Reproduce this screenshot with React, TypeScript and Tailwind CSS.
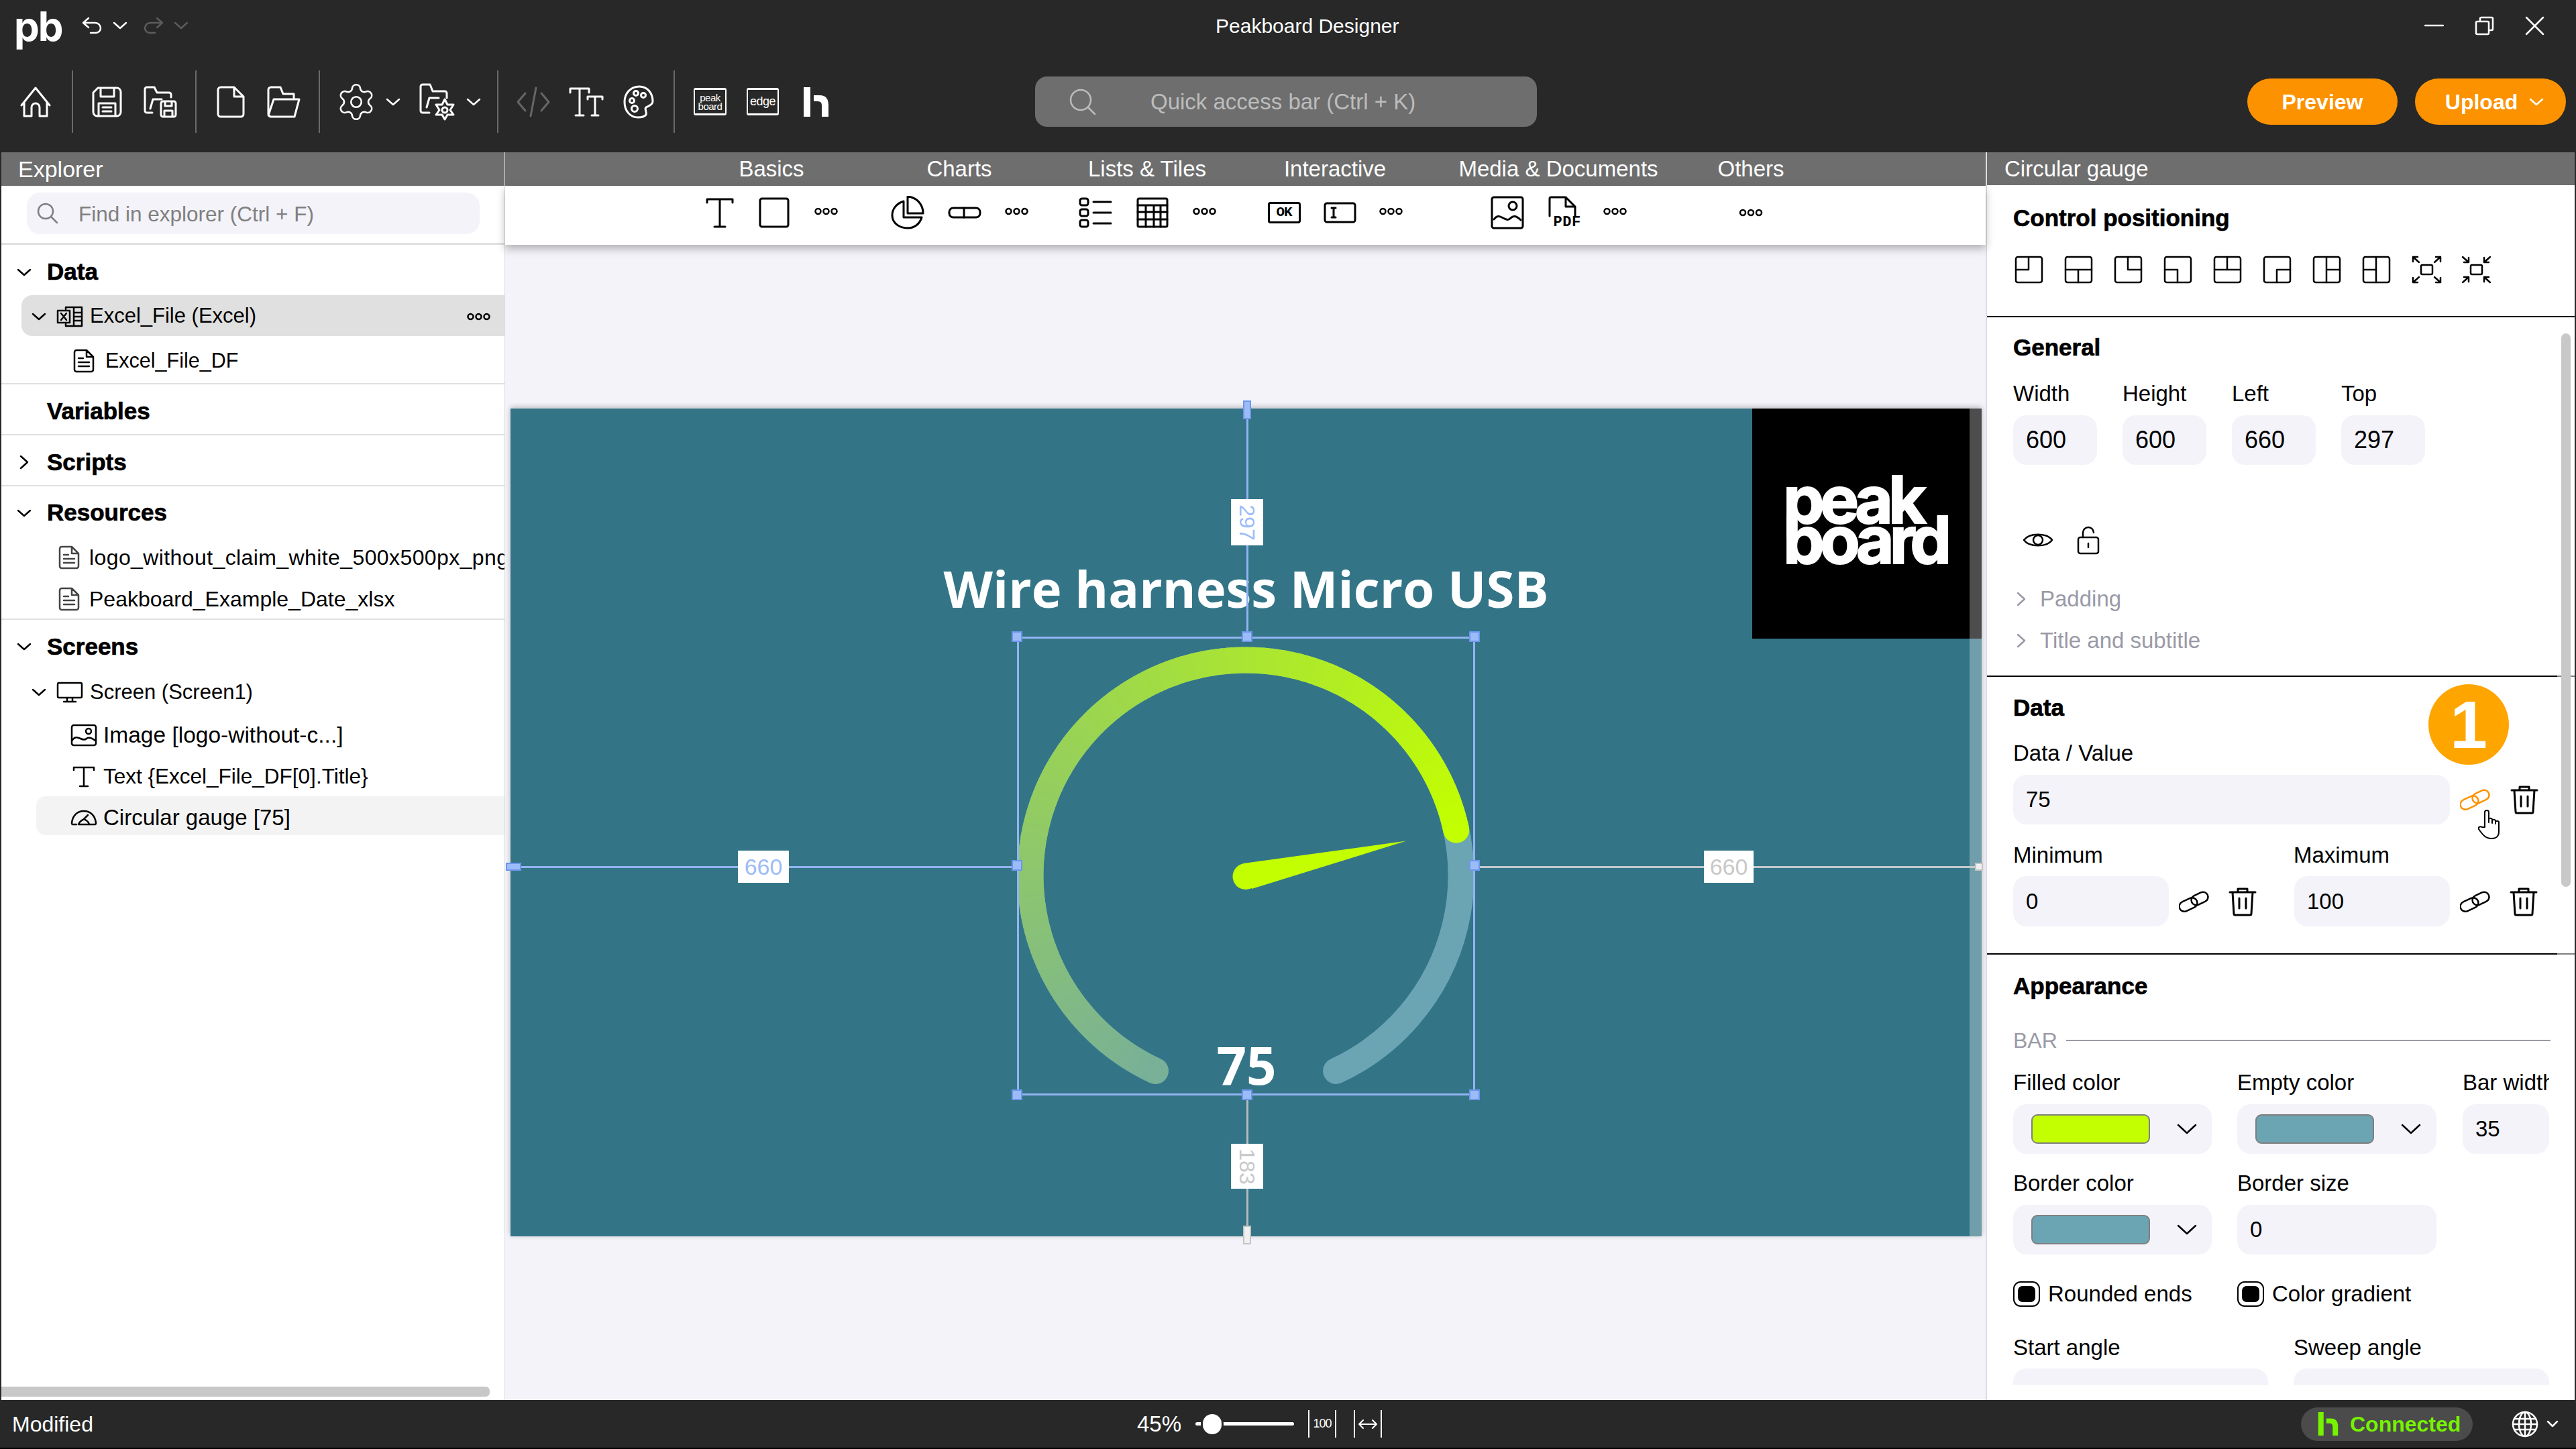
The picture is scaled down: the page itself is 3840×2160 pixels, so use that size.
import type { ReactNode } from 'react'
import { Settings } from 'lucide-react'

const Svg = ({ w, h, sw = 3, className = '', children }: { w: number; h: number; sw?: number; className?: string; children: ReactNode }) => (
  <svg width={w} height={h} viewBox={`0 0 ${w} ${h}`} fill="none" stroke="currentColor" strokeWidth={sw} strokeLinecap="round" strokeLinejoin="round" className={`shrink-0 ${className}`}>
    {children}
  </svg>
)

const ChevronDown = ({ className = '', w = 22, h = 12 }: { className?: string; w?: number; h?: number }) => (
  <Svg w={w} h={h} sw={2.5} className={className}>
    <path d={`M2 2 L${w / 2} ${h - 2} L${w - 2} 2`} />
  </Svg>
)

const ChevronRight = ({ className = '' }: { className?: string }) => (
  <Svg w={14} h={22} sw={2.5} className={className}>
    <path d="M2 2 L12 11 L2 20" />
  </Svg>
)

const Dots = ({ className = '', w = 35 }: { className?: string; w?: number }) => (
  <Svg w={w} h={12} sw={2.5} className={className}>
    <circle cx={w / 2 - 12} cy={6} r={4} />
    <circle cx={w / 2} cy={6} r={4} />
    <circle cx={w / 2 + 12} cy={6} r={4} />
  </Svg>
)

const HubLogo = ({ className = '', w = 37, h = 44 }: { className?: string; w?: number; h?: number }) => (
  <svg width={w} height={h} viewBox="0 0 37 44" fill="currentColor" className={`shrink-0 ${className}`}>
    <path d="M0 0 H10 V44 H0 Z M15 12 H24 Q37 12 37 27 V44 H27 V27 Q27 21 21 21 H15 Z" />
  </svg>
)

const DocIcon = ({ className = '' }: { className?: string }) => (
  <Svg w={32} h={36} sw={2.5} className={className}>
    <path d="M2 5 a3 3 0 0 1 3-3 H20 L30 12 V31 a3 3 0 0 1-3 3 H5 a3 3 0 0 1-3-3 Z M20 2 V12 H30 M8 14 H15 M8 20 H24 M8 26 H24" />
  </Svg>
)

const LinkIcon = ({ className = '' }: { className?: string }) => (
  <Svg w={46} h={38} sw={2.5} className={className}>
    <rect x={0} y={16} width={28} height={15} rx={7.5} transform="rotate(-25 14 23.5)" />
    <rect x={18} y={7} width={26} height={15} rx={7.5} transform="rotate(-25 31 14.5)" />
  </Svg>
)

const TrashIcon = ({ className = '' }: { className?: string }) => (
  <Svg w={42} h={44} sw={3} className={className}>
    <path d="M2 8 H40 M14 8 V3 H28 V8 M6 8 L8 40 a2 2 0 0 0 2 2 H32 a2 2 0 0 0 2-2 L36 8 M16 17 V32 M26 17 V32" />
  </Svg>
)

const positionIcons = [
  'M21 2 V21 H2',
  'M2 21 H41 M21 21 V40',
  'M21 2 V21 H41',
  'M2 21 H21 V40',
  'M21 2 V21 M2 21 H41',
  'M41 21 H21 V40',
  'M21 2 V40 M21 21 H41',
  'M21 2 V40 M2 21 H21',
]

const TextField = ({ value, big, className = '' }: { value: string; big?: boolean; className?: string }) => (
  <div className={`h-[74px] rounded-[20px] bg-[#f3f3f9] pl-[19px] flex items-center ${big ? 'text-[36px]' : 'text-[33px]'} ${className}`}>{value}</div>
)

const Label = ({ children, className = '' }: { children: ReactNode; className?: string }) => (
  <div className={`h-10 leading-10 text-[33px] whitespace-nowrap overflow-hidden ${className}`}>{children}</div>
)

const Heading = ({ children, className = '' }: { children: ReactNode; className?: string }) => (
  <div className={`h-10 leading-10 text-[35px] font-bold [-webkit-text-stroke:0.7px_black] ${className}`}>{children}</div>
)

const ColorSelect = ({ swatch, className = '' }: { swatch: string; className?: string }) => (
  <div className={`h-[74px] rounded-[20px] bg-[#f3f3f9] flex items-center pl-[27px] ${className}`}>
    <div className={`w-[177px] h-[44px] rounded-[9px] border-2 border-[#7f7f7f] ${swatch}`} />
    <ChevronDown w={30} h={16} className="ml-[40px]" />
  </div>
)

const Check = ({ label, className = '' }: { label: string; className?: string }) => (
  <div className={`flex items-center h-10 ${className}`}>
    <div className="w-10 h-[38px] rounded-[11px] border-[2.5px] border-black flex items-center justify-center">
      <div className="w-[26px] h-[24px] rounded-[7px] bg-black" />
    </div>
    <span className="ml-3 text-[33px]">{label}</span>
  </div>
)

const Divider = ({ className = '' }: { className?: string }) => <div className={`w-[2px] h-[93px] bg-[#6a6a6a] shrink-0 ${className}`} />

function TitleBar() {
  return (
    <div className="h-[76px] flex items-center text-white">
      <div className="ml-[21px] w-[72px] mt-[2px] [font-family:'Inter',sans-serif] font-bold text-[60px] leading-none tracking-[-2px]">pb</div>
      <Svg w={31} h={26} sw={2.5} className="ml-[29px]">
        <path d="M10 2 L2 9 L10 16 M2 9 H20 a8 8 0 0 1 8 8 a7 7 0 0 1-7 7 H13" />
      </Svg>
      <ChevronDown className="ml-[15px]" />
      <Svg w={31} h={26} sw={2.5} className="ml-[23px] text-[#5c5c5c]">
        <path d="M21 2 L29 9 L21 16 M29 9 H11 a8 8 0 0 0-8 8 a7 7 0 0 0 7 7 H18" />
      </Svg>
      <ChevronDown className="ml-[15px] text-[#5c5c5c]" />
      <div className="ml-[1531px] text-[30px] whitespace-nowrap">Peakboard Designer</div>
      <div className="ml-auto pr-[47px] flex items-center">
        <Svg w={29} h={4} sw={2.5}>
          <path d="M1 2 H28" />
        </Svg>
        <Svg w={29} h={29} sw={2.5} className="ml-[46px]">
          <path d="M8 7 V4 a2 2 0 0 1 2-2 H25 a2 2 0 0 1 2 2 V19 a2 2 0 0 1-2 2 H22 M2 10 a2 2 0 0 1 2-2 H19 a2 2 0 0 1 2 2 V25 a2 2 0 0 1-2 2 H4 a2 2 0 0 1-2-2 Z" />
        </Svg>
        <Svg w={29} h={29} sw={2.5} className="ml-[46px]">
          <path d="M2 2 L27 27 M27 2 L2 27" />
        </Svg>
      </div>
    </div>
  )
}

function ToolBar() {
  return (
    <div className="h-[151px] flex items-center text-white">
      <Svg w={48} h={46} className="ml-[29px]">
        <path d="M3 28 L24 2 L45 28 M7 24 V44 H18 V31 a6 6 0 0 1 12 0 V44 H41 V24" />
      </Svg>
      <Divider className="ml-[30px]" />
      <Svg w={45} h={46} className="ml-[28px]">
        <path d="M9 2 H37 a6 6 0 0 1 6 6 V38 a6 6 0 0 1-6 6 H8 a6 6 0 0 1-6-6 V9 Z M13 2 V15 H33 V2 M10 44 V25 H35 V44 M16 31 H29 M16 37 H29" />
      </Svg>
      <Svg w={51} h={48} className="ml-[31px]">
        <path d="M14 40 H6 a3 3 0 0 1-3-3 V5 a3 3 0 0 1 3-3 H17 L21 10 H39 a3 3 0 0 1 3 3 V17 M11 34 L15 20 H28" />
        <path d="M27 26 a3 3 0 0 1 3-3 H46 a3 3 0 0 1 3 3 V43 a3 3 0 0 1-3 3 H30 a3 3 0 0 1-3-3 Z M33 23 V30 H43 V23 M32 46 V37 H44 V46" />
      </Svg>
      <Divider className="ml-[27px]" />
      <Svg w={42} h={48} className="ml-[30px]">
        <path d="M2 6 a4 4 0 0 1 4-4 H26 L40 16 V42 a4 4 0 0 1-4 4 H6 a4 4 0 0 1-4-4 Z M26 2 V16 H40" />
      </Svg>
      <Svg w={50} h={48} className="ml-[33px]">
        <path d="M6 46 a4 4 0 0 1-4-4 V6 a4 4 0 0 1 4-4 H20 L24 12 H40 V20 M2 44 L10 20 H48 L41 46 H6 Z" />
      </Svg>
      <Divider className="ml-[27px]" />
      <Settings size={62} strokeWidth={1} className="ml-[23px] -mx-[3px]" />
      <ChevronDown className="ml-[16px]" />
      <Svg w={56} h={56} className="ml-[27px]">
        <path d="M16 44 H6 a3 3 0 0 1-3-3 V5 a3 3 0 0 1 3-3 H17 L21 12 H39 a3 3 0 0 1 3 3 V22 M12 36 L16 22 H30" />
        <path d="M39 24 L43 32 L52 32 L47 40 L52 47 L43 47 L39 54 L35 47 L26 47 L31 40 L26 32 L35 32 Z" />
        <circle cx={39} cy={40} r={4} />
      </Svg>
      <ChevronDown className="ml-[15px]" />
      <Divider className="ml-[24px]" />
      <Svg w={50} h={46} className="ml-[27px] text-[#666666]">
        <path d="M13 10 L2 23 L13 36 M37 10 L48 23 L37 36 M29 2 L21 44" />
      </Svg>
      <Svg w={52} h={44} className="ml-[28px]">
        <path d="M2 8 V2 H30 V8 M16 2 V42 M10 42 H22 M28 18 V14 H50 V18 M39 14 V42 M34 42 H44" />
      </Svg>
      <Svg w={46} h={50} className="ml-[29px]">
        <path d="M24 2 C38 2 44 14 44 24 C44 30 37 31 34 33 C31 36 36 40 34 44 C31 48 26 48 22 48 C10 48 2 38 2 25 C2 12 11 2 24 2 Z" />
        <circle cx={19} cy={12} r={3.5} />
        <circle cx={30} cy={15} r={3.5} />
        <circle cx={13} cy={23} r={3.5} />
        <circle cx={17} cy={35} r={4.5} />
      </Svg>
      <Divider className="ml-[29px]" />
      <div className="ml-[28px] w-[49px] h-[41px] border-y-[3px] border-x-2 border-white rounded-[3px] flex flex-col items-center justify-center text-[15px] leading-[13px] tracking-[-0.5px]">
        <span>peak</span>
        <span>board</span>
      </div>
      <div className="ml-[30px] w-[48px] h-[41px] border-y-[3px] border-x-2 border-white rounded-[3px] flex items-center justify-center text-[18px] tracking-[-0.5px]">edge</div>
      <HubLogo className="ml-[37px]" />
      <div className="ml-[308px] w-[748px] h-[75px] rounded-[18px] bg-[#6e6e6e] flex items-center text-[#bcbcbc]">
        <Svg w={42} h={42} sw={2.5} className="ml-[50px]">
          <circle cx={18} cy={18} r={15} />
          <path d="M29 29 L39 39" />
        </Svg>
        <span className="ml-[80px] text-[33px] whitespace-nowrap">Quick access bar (Ctrl + K)</span>
      </div>
      <div className="ml-auto pr-[15px] flex items-center">
        <div className="w-[224px] h-[69px] rounded-full bg-[#fc9200] flex items-center justify-center font-bold text-[32px]">Preview</div>
        <div className="ml-[26px] w-[225px] h-[69px] rounded-full bg-[#fc9200] flex items-center justify-center font-bold text-[32px] pl-[12px]">
          Upload
          <ChevronDown className="ml-[17px]" />
        </div>
      </div>
    </div>
  )
}

function TreeRow({ children, className = '' }: { children: ReactNode; className?: string }) {
  return <div className={`flex items-center whitespace-nowrap ${className}`}>{children}</div>
}

function SectionTitle({ title, open, className = '' }: { title: string; open?: boolean; className?: string }) {
  return (
    <div className={`relative flex items-center pl-[68px] pt-[6px] text-[35px] font-bold [-webkit-text-stroke:0.7px_black] ${className}`}>
      {open === true && <ChevronDown className="absolute left-[23px]" />}
      {open === false && <ChevronRight className="absolute left-[27px]" />}
      {title}
    </div>
  )
}

function Explorer() {
  return (
    <div className="w-[753px] shrink-0 flex flex-col bg-white text-black border-l-[2px] border-[#282828] border-r border-r-[#dcdce2] overflow-hidden">
      <div className="h-[50px] bg-[#6e6e6e] text-white text-[34px] flex items-center pl-[25px]">Explorer</div>
      <div className="h-[88px] pt-[10px] pl-[38px] border-b-[3px] border-[#e0e0e0]">
        <div className="w-[675px] h-[62px] rounded-[20px] bg-[#f3f3f9] flex items-center text-[#808080]">
          <Svg w={32} h={32} sw={2.5} className="ml-[15px]">
            <circle cx={13} cy={13} r={11} />
            <path d="M21 21 L30 30" />
          </Svg>
          <span className="ml-[30px] pt-[3px] text-[31.5px] whitespace-nowrap">Find in explorer (Ctrl + F)</span>
        </div>
      </div>

      <SectionTitle title="Data" open className="h-[75px]" />
      <TreeRow className="ml-[30px] h-[61px] rounded-l-[16px] bg-[#e0e0e0] text-[31px] pt-[2px]">
        <ChevronDown className="ml-[15px]" />
        <Svg w={40} h={32} sw={2.5} className="ml-[15px]">
          <path d="M14 5 V2 H38 V30 H14 V27 M26 2 V30 M26 10 H38 M26 16 H38 M26 22 H38" />
          <path d="M2 7 H20 V25 H2 Z M7 11 L15 21 M15 11 L7 21" />
        </Svg>
        <span className="ml-[10px]">Excel_File (Excel)</span>
        <Dots w={37} className="ml-auto mr-[20px]" />
      </TreeRow>
      <TreeRow className="h-[70px] pl-[107px] text-[30.5px] pt-[4px]">
        <DocIcon />
        <span className="ml-[16px]">Excel_File_DF</span>
      </TreeRow>

      <div className="h-[2px] bg-[#e0e0e0]" />
      <SectionTitle title="Variables" className="h-[74px]" />
      <div className="h-[2px] bg-[#e0e0e0]" />
      <SectionTitle title="Scripts" open={false} className="h-[74px]" />
      <div className="h-[2px] bg-[#e0e0e0]" />
      <SectionTitle title="Resources" open className="h-[73px]" />
      <TreeRow className="h-[62px] pl-[85px] text-[32px] pt-[4px] tracking-[0.4px]">
        <DocIcon className="text-[#444444]" />
        <span className="ml-[14px]">logo_without_claim_white_500x500px_png</span>
      </TreeRow>
      <TreeRow className="h-[62px] pl-[85px] text-[32px] pt-[4px]">
        <DocIcon className="text-[#444444]" />
        <span className="ml-[14px]">Peakboard_Example_Date_xlsx</span>
      </TreeRow>

      <div className="h-[2px] bg-[#e0e0e0]" />
      <SectionTitle title="Screens" open className="h-[74px]" />
      <TreeRow className="h-[62px] pl-[45px] text-[31px] pt-[6px]">
        <ChevronDown />
        <Svg w={40} h={32} sw={2.5} className="ml-[15px]">
          <path d="M4 2 H36 a2 2 0 0 1 2 2 V22 a2 2 0 0 1-2 2 H4 a2 2 0 0 1-2-2 V4 a2 2 0 0 1 2-2 Z M16 24 V30 M24 24 V30 M11 30 H29" />
        </Svg>
        <span className="ml-[10px]">Screen (Screen1)</span>
      </TreeRow>
      <TreeRow className="h-[62px] pl-[103px] text-[33.5px] pt-[10px]">
        <Svg w={40} h={34} sw={2.5}>
          <rect x={2} y={2} width={36} height={30} rx={3} />
          <circle cx={27} cy={11} r={4} />
          <path d="M3 24 C10 14 18 28 24 22 C28 19 33 22 37 25" />
        </Svg>
        <span className="ml-[9px]">Image [logo-without-c...]</span>
      </TreeRow>
      <TreeRow className="h-[62px] pl-[105px] text-[31.5px] pt-[10px]">
        <Svg w={36} h={32} sw={2.5}>
          <path d="M3 6 V2 H33 V6 M18 2 V30 M12 30 H24" />
        </Svg>
        <span className="ml-[11px]">{'Text {Excel_File_DF[0].Title}'}</span>
      </TreeRow>
      <TreeRow className="ml-[52px] mt-[3px] h-[58px] pl-[51px] rounded-l-[14px] bg-[#f3f3f3] text-[33px] pt-[6px]">
        <Svg w={40} h={24} sw={2.5}>
          <path d="M9 22 H3 a2 2 0 0 1-1-2 C3 9 10 2 20 2 C30 2 37 9 38 20 a2 2 0 0 1-1 2 H29 M12 22 C14 16 19 15 20 14 L26 8 M12 22 H28 C27 18 24 16 22 15" />
        </Svg>
        <span className="ml-[9px]">Circular gauge [75]</span>
      </TreeRow>

      <div className="flex-1" />
      <div className="h-[15px] w-[728px] bg-[#c8c8c8] rounded-r-[6px] mb-[5px]" />
    </div>
  )
}

const groupWidths = ['w-[280px]', 'w-[280px]', 'w-[280px]', 'w-[280px]', 'w-[386px]', 'w-[188px]']
const groupNames = ['Basics', 'Charts', 'Lists & Tiles', 'Interactive', 'Media & Documents', 'Others']

const handleSpots = [
  'left-[747px] top-[332px]', 'left-[1090px] top-[332px]', 'left-[1429px] top-[332px]',
  'left-[747px] top-[673px]', 'left-[1429px] top-[673px]',
  'left-[747px] top-[1015px]', 'left-[1090px] top-[1015px]', 'left-[1429px] top-[1015px]',
]

// the filled bar's colour runs along the arc, so it is drawn as short segments
const CX = 1096
const CY = 696
const R = 321
const START_ANGLE = 114.8
const FILL_SWEEP = 233
const SEGMENTS = 180

const polar = (deg: number) => {
  const a = (deg * Math.PI) / 180
  return [CX + R * Math.cos(a), CY + R * Math.sin(a)]
}

const mix = (t: number) => {
  const c = [0x78 + (0xc3 - 0x78) * t, 0xb0 + (0xff - 0xb0) * t, 0x98 + (0x00 - 0x98) * t]
  return `rgb(${c.map(Math.round).join(',')})`
}

function Gauge() {
  const [sx, sy] = polar(START_ANGLE)
  const [ex, ey] = polar(START_ANGLE + FILL_SWEEP)
  return (
    <svg width={2193} height={1234} viewBox="0 0 2193 1234" fill="none" className="absolute left-0 top-0">
      <path d="M961.4 987.4 A321 321 0 1 1 1230.6 987.4" stroke="#6ba5b3" strokeWidth={39} strokeLinecap="round" />
      <circle cx={sx} cy={sy} r={19.5} fill={mix(0)} />
      <circle cx={ex} cy={ey} r={19.5} fill={mix(1)} />
      {Array.from({ length: SEGMENTS }, (_, i) => {
        const a0 = START_ANGLE + (FILL_SWEEP * i) / SEGMENTS
        const a1 = START_ANGLE + (FILL_SWEEP * (i + 1)) / SEGMENTS + 0.3
        const [x0, y0] = polar(a0)
        const [x1, y1] = polar(Math.min(a1, START_ANGLE + FILL_SWEEP))
        return <path key={i} d={`M${x0} ${y0} A${R} ${R} 0 0 1 ${x1} ${y1}`} stroke={mix(i / SEGMENTS)} strokeWidth={39} />
      })}
      <circle cx={1096} cy={697.6} r={19.5} fill="#c3ff00" />
      <polygon points="1335.4,644.6 1093,678 1105,716" fill="#c3ff00" />
    </svg>
  )
}

function Canvas() {
  return (
    <div className="flex-1 min-w-0 flex flex-col bg-[#f3f3f9]">
      <div className="h-[50px] bg-[#6e6e6e] text-white text-[33px] flex items-center pl-[257px]">
        {groupNames.map((name, i) => (
          <div key={name} className={`${groupWidths[i]} text-center whitespace-nowrap`}>{name}</div>
        ))}
      </div>
      <div className="relative z-10 h-[88px] pb-[8px] bg-white text-black flex items-center pl-[257px] shadow-[0_6px_12px_rgba(0,0,0,0.28)]">
        <div className={`${groupWidths[0]} flex items-center justify-center gap-[37px]`}>
          <Svg w={42} h={46}>
            <path d="M2 8 V3 H40 V8 M21 3 V44 M13 44 H29" />
          </Svg>
          <Svg w={46} h={46}>
            <rect x={2} y={2} width={42} height={42} rx={3} />
          </Svg>
          <Dots className="-mt-[4px]" />
        </div>
        <div className={`${groupWidths[1]} flex items-center justify-center gap-[35px]`}>
          <Svg w={50} h={50}>
            <path d="M25 5 V1 C38 2 48 12 48 26 H25 V5 M19 8 C9 11 2 19 2 29 C2 40 12 48 25 48 C35 48 43 42 46 32 H19 Z" />
          </Svg>
          <Svg w={50} h={18}>
            <rect x={2} y={2} width={46} height={14} rx={6} />
            <path d="M24 2 V16" />
          </Svg>
          <Dots className="-mt-[4px]" />
        </div>
        <div className={`${groupWidths[2]} flex items-center justify-center gap-[36px]`}>
          <Svg w={50} h={46}>
            <rect x={2} y={2} width={12} height={10} rx={3} />
            <rect x={2} y={18} width={12} height={10} rx={3} />
            <rect x={2} y={34} width={12} height={10} rx={3} />
            <path d="M22 7 H48 M22 23 H48 M22 39 H48" />
          </Svg>
          <Svg w={48} h={46}>
            <rect x={2} y={2} width={44} height={42} rx={2} />
            <path d="M2 12 H46 M2 22 H46 M2 33 H46 M14 12 V44 M26 12 V44 M36 12 V44" />
          </Svg>
          <Dots className="-mt-[4px]" />
        </div>
        <div className={`${groupWidths[3]} flex items-center justify-center gap-[34px]`}>
          <div className="w-[49px] h-[32px] border-[3px] border-black rounded-[4px] flex items-center justify-center text-[21px] font-bold tracking-[-1px] [font-family:'Liberation_Mono',monospace]">OK</div>
          <Svg w={49} h={32}>
            <rect x={2} y={2} width={45} height={28} rx={3} />
            <path d="M12 9 H18 M15 9 V23 M12 23 H18" />
          </Svg>
          <Dots className="-mt-[4px]" />
        </div>
        <div className={`${groupWidths[4]} flex items-center justify-center gap-[34px]`}>
          <Svg w={50} h={50}>
            <rect x={2} y={2} width={46} height={46} rx={3} />
            <circle cx={33} cy={15} r={6} />
            <path d="M5 35 C14 22 22 42 30 33 C35 28 40 31 45 36" />
          </Svg>
          <div className="relative w-[50px] h-[50px]">
            <Svg w={50} h={50}>
              <path d="M4 30 V4 a2 2 0 0 1 2-2 H28 L42 16 V30 M28 2 V16 H42" />
            </Svg>
            <span className="absolute left-[10px] top-[28px] text-[22px] font-bold leading-6 tracking-[0.5px] [font-family:'Liberation_Mono',monospace]">PDF</span>
          </div>
          <Dots className="-mt-[4px]" />
        </div>
        <div className={`${groupWidths[5]} flex items-center justify-center`}>
          <Dots w={46} />
        </div>
      </div>

      <div className="relative ml-[8px] mt-[244px] w-[2193px] h-[1234px] bg-[#337587] shadow-[0_-2px_8px_rgba(0,0,0,0.25)]">
        <div className="absolute right-0 top-0 w-[342px] h-[343px] bg-black text-white [font-family:'Inter',sans-serif] font-bold">
          <div className="absolute left-[46px] top-[106px] text-[98px] leading-[60px] tracking-[-7px] [-webkit-text-stroke:2px_white]">peak<br />board</div>
        </div>
        <div className="absolute left-0 right-0 top-[223px] text-center text-white font-bold text-[76px] leading-[90px] whitespace-nowrap [font-family:'Open_Sans',sans-serif]">Wire harness Micro USB</div>
        <Gauge />
        <div className="absolute left-[985px] w-[224px] top-[933px] text-center text-white font-bold text-[78px] leading-[90px] [font-family:'Open_Sans',sans-serif]">75</div>
        <div className="absolute right-0 top-0 bottom-0 w-[18px] bg-white/30" />

        {/* guides */}
        <div className="absolute left-[2px] w-[753px] top-[682px] h-[3px] bg-[#92b4f2]" />
        <div className="absolute left-[1437px] right-0 top-[682px] h-[3px] bg-[#c4c8cc]" />
        <div className="absolute left-[1097px] top-0 h-[340px] w-[3px] bg-[#92b4f2]" />
        <div className="absolute left-[1097px] top-[1023px] h-[211px] w-[3px] bg-[#b4bcc0]" />
        <div className="absolute left-[755px] top-[340px] w-[683px] h-[684px] border-[3px] border-[#92b4f2]" />
        {handleSpots.map((spot) => (
          <div key={spot} className={`absolute ${spot} w-[16px] h-[16px] bg-[#9cbcf8] border-2 border-[#6c96ec]`} />
        ))}
        <div className="absolute -left-[7px] top-[677px] w-[23px] h-[12px] bg-[#9cbcf8] border-2 border-[#6c96ec]" />
        <div className="absolute left-[1092px] -top-[12px] w-[12px] h-[28px] bg-[#9cbcf8] border-2 border-[#6c96ec]" />
        <div className="absolute left-[1092px] top-[1218px] w-[12px] h-[28px] bg-[#f0f0f0] border-2 border-[#c4c4c4]" />
        <div className="absolute -right-[2px] top-[677px] w-[12px] h-[12px] bg-[#f0f0f0] border-2 border-[#c4c4c4]" />

        {/* distance labels */}
        <div className="absolute left-[339px] top-[659px] w-[76px] h-[48px] bg-white text-[#9cbcf8] text-[34px] flex items-center justify-center">660</div>
        <div className="absolute left-[1779px] top-[659px] w-[74px] h-[48px] bg-white text-[#c8c8c8] text-[34px] flex items-center justify-center">660</div>
        <div className="absolute left-[1074px] top-[135px] w-[48px] h-[69px] bg-white text-[#9cbcf8] text-[32px] flex items-center justify-center">
          <span className="rotate-90">297</span>
        </div>
        <div className="absolute left-[1074px] top-[1096px] w-[48px] h-[67px] bg-white text-[#c8c8c8] text-[32px] flex items-center justify-center">
          <span className="rotate-90">183</span>
        </div>
      </div>
    </div>
  )
}

function Properties() {
  return (
    <div className="w-[880px] shrink-0 flex flex-col bg-white text-black border-l-[2px] border-[#dcdce2] border-r-[2px] border-r-[#282828] relative">
      <div className="h-[49px] bg-[#6e6e6e] text-white text-[33px] flex items-center pl-[26px]">Circular gauge</div>
      <div className="h-[195px] pl-[39px]">
        <Heading className="mt-[29px]">Control positioning</Heading>
        <div className="mt-[36px] ml-[2px] flex gap-[31px] items-center h-[42px]">
          {positionIcons.map((d) => (
            <Svg key={d} w={43} h={42} sw={2.5}>
              <rect x={2} y={2} width={39} height={38} rx={3} />
              <path d={d} />
            </Svg>
          ))}
          <Svg w={45} h={42} sw={2.5}>
            <rect x={14} y={14} width={17} height={14} rx={2} />
            <path d="M2 2 L11 10 M2 2 H9 M2 2 V9 M43 2 L34 10 M43 2 H36 M43 2 V9 M2 40 L11 32 M2 40 H9 M2 40 V33 M43 40 L34 32 M43 40 H36 M43 40 V33" />
          </Svg>
          <Svg w={45} h={42} sw={2.5} className="-ml-[2px]">
            <rect x={14} y={14} width={17} height={14} rx={2} />
            <path d="M2 2 L11 10 M11 10 H4 M11 10 V3 M43 2 L34 10 M34 10 H41 M34 10 V3 M2 40 L11 32 M11 32 H4 M11 32 V39 M43 40 L34 32 M34 32 H41 M34 32 V39" />
          </Svg>
        </div>
      </div>
      <div className="h-[2px] bg-black" />

      <div className="relative flex-1 min-h-0 pl-[39px] overflow-hidden mb-[22px]">
        <Heading className="mt-[25px]">General</Heading>
        <div className="mt-[29px] flex">
          {[['Width', '600'], ['Height', '600'], ['Left', '660'], ['Top', '297']].map(([label, value]) => (
            <div key={label} className="w-[163px]">
              <Label>{label}</Label>
              <TextField value={value} big className="mt-3 w-[125px]" />
            </div>
          ))}
        </div>
        <div className="mt-[92px] h-10 flex items-center">
          <Svg w={46} h={30} sw={2.5} className="ml-[14px]">
            <path d="M2 15 C10 4 36 4 44 15 C36 26 10 26 2 15 Z" />
            <circle cx={23} cy={15} r={7} />
          </Svg>
          <Svg w={34} h={44} sw={2.5} className="ml-[35px]">
            <rect x={2} y={18} width={30} height={24} rx={3} />
            <path d="M9 18 V11 a8 8 0 0 1 16 0 M17 27 V33" />
          </Svg>
        </div>
        <div className="mt-[48px] h-10 flex items-center text-[#9a9aa6] text-[33px]">
          <ChevronRight className="ml-[5px]" />
          <span className="ml-[21px]">Padding</span>
        </div>
        <div className="mt-[22px] h-10 flex items-center text-[#9a9aa6] text-[33px]">
          <ChevronRight className="ml-[5px]" />
          <span className="ml-[21px]">Title and subtitle</span>
        </div>
        <div className="-ml-[39px] mt-[32px] h-[2px] bg-black" />

        <Heading className="mt-[26px]">Data</Heading>
        <Label className="mt-[28px]">Data / Value</Label>
        <div className="mt-3 flex items-center">
          <TextField value="75" className="w-[651px]" />
          <LinkIcon className="ml-[15px] text-[#fc9200]" />
          <TrashIcon className="ml-[29px]" />
        </div>
        <div className="mt-[26px] flex">
          <Label className="w-[418px]">Minimum</Label>
          <Label>Maximum</Label>
        </div>
        <div className="mt-[11px] flex items-center">
          <TextField value="0" className="w-[232px] h-[75px]" />
          <LinkIcon className="ml-[15px]" />
          <TrashIcon className="ml-[28px]" />
          <TextField value="100" className="ml-[56px] w-[232px] h-[75px]" />
          <LinkIcon className="ml-[15px]" />
          <TrashIcon className="ml-[28px]" />
        </div>
        <div className="-ml-[39px] mt-[40px] h-[2px] bg-black" />

        <Heading className="mt-[27px]">Appearance</Heading>
        <div className="mt-[41px] h-10 flex items-center text-[#9a9aa6] text-[32px]">
          BAR
          <div className="ml-[13px] w-[722px] h-[2px] bg-[#9a9aa6]" />
        </div>
        <div className="mt-[23px] flex">
          <Label className="w-[334px]">Filled color</Label>
          <Label className="w-[336px]">Empty color</Label>
          <Label className="w-[129px]">Bar width</Label>
        </div>
        <div className="mt-3 flex">
          <ColorSelect swatch="bg-[#c3ff00]" className="w-[296px]" />
          <ColorSelect swatch="bg-[#6ba5b3]" className="ml-[38px] w-[297px]" />
          <TextField value="35" className="ml-[39px] w-[129px]" />
        </div>
        <div className="mt-6 flex">
          <Label className="w-[334px]">Border color</Label>
          <Label>Border size</Label>
        </div>
        <div className="mt-3 flex">
          <ColorSelect swatch="bg-[#6ba5b3]" className="w-[296px]" />
          <TextField value="0" className="ml-[38px] w-[297px]" />
        </div>
        <div className="mt-[39px] flex">
          <Check label="Rounded ends" className="w-[334px]" />
          <Check label="Color gradient" />
        </div>
        <div className="mt-10 flex">
          <Label className="w-[418px]">Start angle</Label>
          <Label>Sweep angle</Label>
        </div>
        <div className="mt-[11px] flex">
          <TextField value="" className="w-[380px]" />
          <TextField value="" className="ml-[38px] w-[381px]" />
        </div>
        <div className="absolute right-0 top-0 bottom-0 w-[26px] bg-white/50">
          <div className="absolute left-[6px] top-[24px] w-[14px] h-[825px] rounded-full bg-[#c8c8c8]" />
        </div>
      </div>

      {/* step marker and pointer */}
      <div className="absolute left-[658px] top-[793px] w-[120px] h-[120px] rounded-full bg-[#ffa500] text-white font-bold text-[100px] flex items-center justify-center">1</div>
      <Svg w={34} h={46} sw={2} className="absolute left-[731px] top-[979px] text-black">
        <path fill="#ffffff" d="M11 27 V5 a3 3 0 0 1 6 0 V20 V15 a3 3 0 0 1 5 0 V21 V17 a3 3 0 0 1 5 0 V22 V19 a3 3 0 0 1 5 0 V34 C32 41 27 44 21 44 C13 44 9 40 2 30 C1 27 4 25 7 27 Z" />
      </Svg>
    </div>
  )
}

function StatusBar() {
  return (
    <div className="h-[73px] flex items-center text-white border-b-[2px] border-black">
      <span className="ml-[18px] w-[1677px] text-[32px]">Modified</span>
      <span className="text-[33px] w-[87px]">45%</span>
      <div className="relative w-[147px] h-[30px] flex items-center">
        <div className="w-full h-[5px] rounded-full bg-white" />
        <div className="absolute left-[8px] w-[34px] h-[34px] rounded-full bg-[#282828]" />
        <div className="absolute left-[11px] w-[28px] h-[30px] rounded-full bg-white" />
      </div>
      <div className="ml-[21px] w-[42px] h-[41px] border-x-2 border-white flex items-center justify-center text-[18px] tracking-[-1px]">100</div>
      <div className="ml-[26px] w-[42px] h-[41px] border-x-2 border-white flex items-center justify-center">
        <Svg w={28} h={16} sw={2}>
          <path d="M1 8 H27 M7 2 L1 8 L7 14 M21 2 L27 8 L21 14" />
        </Svg>
      </div>
      <div className="ml-[1370px] w-[256px] h-[50px] rounded-full bg-[#4b4b4b] flex items-center pl-[25px] text-[#76f300] font-bold text-[32px]">
        <HubLogo w={31} h={35} />
        <span className="ml-[17px]">Connected</span>
      </div>
      <Svg w={40} h={40} sw={2.5} className="ml-[58px]">
        <circle cx={20} cy={20} r={18} />
        <ellipse cx={20} cy={20} rx={9} ry={18} />
        <path d="M20 2 V38 M4 12 H36 M2 20 H38 M4 28 H36" />
      </Svg>
      <ChevronDown w={18} h={11} className="ml-[12px]" />
    </div>
  )
}

export default function App() {
  return (
    <div className="w-[3840px] h-[2160px] flex flex-col bg-[#282828] overflow-hidden [font-family:'Liberation_Sans',sans-serif]">
      <TitleBar />
      <ToolBar />
      <div className="flex-1 min-h-0 flex">
        <Explorer />
        <Canvas />
        <Properties />
      </div>
      <StatusBar />
    </div>
  )
}
